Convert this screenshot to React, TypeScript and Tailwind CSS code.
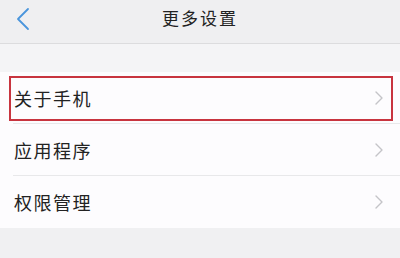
import { ChevronRight } from 'lucide-react'

const rows = [
  { label: '关于手机', active: true },
  { label: '应用程序', active: false },
  { label: '权限管理', active: false },
]

function BackIcon() {
  return (
    <svg width="16" height="24" viewBox="0 0 16 24" fill="none">
      <path d="M13 2 L3 12 L13 22" stroke="#4a95dc" strokeWidth="1.8" strokeLinecap="round" strokeLinejoin="round" />
    </svg>
  )
}

export default function App() {
  return (
    <div
      className="w-[400px] h-[258px] bg-[#f0f0f2] flex flex-col text-[#222]"
      style={{ fontFamily: '"Noto Sans CJK SC", "Noto Sans", sans-serif' }}
    >
      <div className="h-[44px] bg-[#efeff1] border-b border-[#dcdcde] flex items-center relative">
        <div className="pl-[15px] pb-[6px] flex items-center">
          <BackIcon />
        </div>
        <div className="absolute inset-0 flex items-center justify-center text-[17px] tracking-[2px] pb-[8px]">
          更多设置
        </div>
      </div>

      <div className="h-[28px] bg-[#f4f4f6]" />

      <div className="bg-[#fdfcfe] flex flex-col">
        {rows.map((row, i) => (
          <div key={row.label} className="h-[52px] relative flex items-center pl-[14px] pr-[9px]">
            <span className="flex-1 text-[18px] tracking-[1.5px]">{row.label}</span>
            <ChevronRight size={24} strokeWidth={1.4} className="text-[#c4c4c8]" />
            {i < rows.length - 1 && (
              <div className="absolute left-[13px] right-0 bottom-0 h-px bg-[#e8e8ea]" />
            )}
            {row.active && (
              <div className="absolute left-[9px] right-[7px] top-[4px] bottom-[3px] border-2 border-[#c8343f]" />
            )}
          </div>
        ))}
      </div>
    </div>
  )
}
